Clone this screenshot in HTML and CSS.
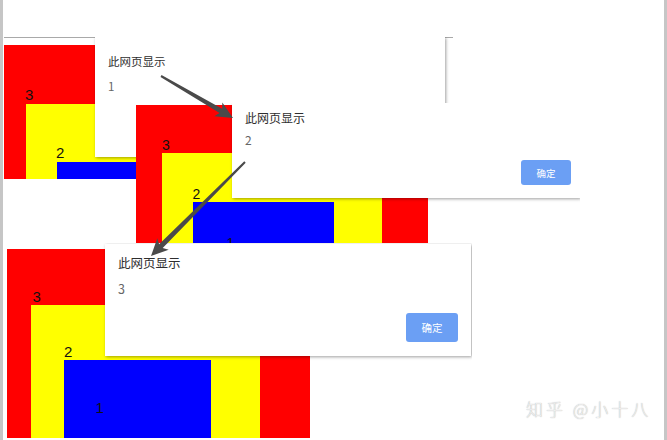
FILE: index.html
```html
<!DOCTYPE html>
<html lang="zh-CN">
<head>
<meta charset="utf-8">
<title>此网页显示</title>
<link rel="stylesheet" href="styles.css">
</head>
<body>
<div class="desk">
  <div class="bar"></div>
  <div class="stage">
    <div class="shot shot1">
      <div class="rule"></div>
      <div class="box red">
        <div class="lbl l3">3</div>
        <div class="box yellow">
          <div class="lbl l2">2</div>
          <div class="box blue"><div class="lbl l1">1</div></div>
        </div>
      </div>
      <div class="dialog">
        <div class="title">此网页显示</div>
        <div class="msg">1</div>
        <div class="actions"><button class="ok">确定</button></div>
      </div>
    </div>

    <div class="shot shot2">
      <div class="box red">
        <div class="lbl l3">3</div>
        <div class="box yellow">
          <div class="lbl l2">2</div>
          <div class="box blue"><div class="lbl l1">1</div></div>
        </div>
      </div>
      <div class="dialog">
        <div class="title">此网页显示</div>
        <div class="msg">2</div>
        <div class="actions"><button class="ok">确定</button></div>
      </div>
    </div>

    <div class="shot shot3">
      <div class="box red">
        <div class="lbl l3">3</div>
        <div class="box yellow">
          <div class="lbl l2">2</div>
          <div class="box blue"><div class="lbl l1">1</div></div>
        </div>
      </div>
      <div class="dialog">
        <div class="title">此网页显示</div>
        <div class="msg">3</div>
        <div class="actions"><button class="ok">确定</button></div>
      </div>
    </div>
  </div>
  <div class="bar"></div>

  <svg class="arrows" width="667" height="440" viewBox="0 0 667 440" aria-hidden="true">
    <polygon points="160.5,76.9 219.6,113.1 214.3,116.3 233,118 222.3,102.5 222.2,108.7 161.5,75.1"/>
    <polygon points="245.7,162.7 162.7,247.9 168.7,249.7 151,256 157.3,238.3 159.1,244.3 244.3,161.3"/>
  </svg>

  <div class="mark">知乎 @小十八</div>
</div>
</body>
</html>
```

FILE: styles.css
```css
* { box-sizing: border-box; }

html, body {
  margin: 0;
  padding: 0;
  background: #fff;
}

.desk {
  position: relative;
  width: 667px;
  height: 440px;
  display: flex;
  overflow: hidden;
  background: #fff;
}

.bar {
  width: 3px;
  flex: none;
  background: #c6c6c6;
}

.stage {
  position: relative;
  flex: 1;
}

/* each screenshot is a window placed on the canvas */
.shot {
  position: absolute;
  background: #fff;
  overflow: hidden;
}

.shot1 { left: 1px; top: 37px; width: 449px; height: 142px; }
.shot2 { left: 133px; top: 103px; width: 444px; height: 140px; }
.shot3 { left: 0; top: 243px; width: 469px; height: 195px; }

.rule {
  height: 1px;
  background: #a9a9a9;
}

/* nested coloured boxes */
.box { position: relative; }
.red { background: #ff0000; }
.yellow { background: #ffff00; }
.blue { background: #0000ff; }

.lbl {
  font-family: "Liberation Sans", "Noto Sans", sans-serif;
  color: #111;
}

/* frame 1 */
.shot1 .red { margin-top: 7px; width: 300px; height: 150px; padding-top: 40px; }
.shot1 .yellow { margin-left: 22px; width: 250px; height: 90px; padding-top: 39px; }
.shot1 .blue { margin-left: 31px; width: 200px; height: 60px; padding-top: 40px; }
.shot1 .lbl { font-size: 15px; height: 19px; line-height: 19px; }
.shot1 .l3 { margin-left: 21px; }
.shot1 .l2 { margin-left: 30px; }
.shot1 .l1 { margin-left: 31px; }

/* frame 2 */
.shot2 .red { margin-top: 2px; width: 292px; height: 150px; padding-top: 33px; }
.shot2 .yellow { margin-left: 26px; width: 220px; height: 100px; padding-top: 34px; }
.shot2 .blue { margin-left: 31px; width: 141px; height: 60px; padding-top: 34px; }
.shot2 .lbl { font-size: 14px; height: 15px; line-height: 15px; }
.shot2 .l3 { margin-left: 26px; }
.shot2 .l2 { margin-left: 30.5px; }
.shot2 .l1 { margin-left: 33.5px; }

/* frame 3 */
.shot3 .red { margin-top: 6px; margin-left: 4px; width: 303px; height: 200px; padding-top: 40px; }
.shot3 .yellow { margin-left: 24px; width: 229px; height: 140px; padding-top: 39px; }
.shot3 .blue { margin-left: 33px; width: 147px; height: 90px; padding-top: 40px; }
.shot3 .lbl { font-size: 15px; height: 16px; line-height: 16px; }
.shot3 .l3 { margin-left: 25.5px; }
.shot3 .l2 { margin-left: 33px; }
.shot3 .l1 { margin-left: 31.5px; }

/* alert dialogs (overlay the page) */
.dialog {
  position: absolute;
  display: flex;
  flex-direction: column;
  background: #fff;
  overflow: hidden;
  font-family: "Noto Sans CJK SC", "Noto Sans", sans-serif;
  box-shadow: 1px 1px 3px rgba(0, 0, 0, 0.38);
}

.title { color: #2e2e2e; }
.msg { color: #666; }

.actions {
  display: flex;
  justify-content: flex-end;
}

.ok {
  border: none;
  border-radius: 3px;
  background: #6b9ff4;
  color: #fff;
  font-family: "Noto Sans CJK SC", sans-serif;
  padding: 0;
  margin: 0;
}

.shot1 .dialog { left: 91px; top: 0; width: 350px; height: 120px; padding: 16px 13px 13px 13px; }
.shot1 .title, .shot1 .msg { font-size: 11.5px; line-height: 17px; }
.shot1 .msg { margin-top: 8px; }
.shot1 .actions { margin-top: 13px; }
.shot1 .ok { width: 50px; height: 26px; font-size: 10px; }

.shot2 .dialog { left: 96px; top: 0; width: 348px; height: 95px; padding: 6px 9px 13px 13px; }
.shot2 .title, .shot2 .msg { font-size: 12px; line-height: 17px; }
.shot2 .msg { margin-top: 5px; }
.shot2 .actions { margin-top: 12px; }
.shot2 .ok { width: 50px; height: 25px; font-size: 9.5px; }

.shot3 .dialog { left: 102px; top: 1px; width: 366px; height: 112px; padding: 10px 13px 14px 13px; }
.shot3 .title, .shot3 .msg { font-size: 12.5px; line-height: 18px; }
.shot3 .msg { margin-top: 8px; }
.shot3 .actions { margin-top: 15px; }
.shot3 .ok { width: 52px; height: 29px; font-size: 10.5px; }

/* annotation arrows drawn over the screenshots */
.arrows {
  position: absolute;
  left: 0;
  top: 0;
  pointer-events: none;
}
.arrows polygon { fill: #4a4a4a; }

/* watermark */
.mark {
  position: absolute;
  left: 526px;
  top: 399px;
  font-family: "Noto Sans CJK SC", sans-serif;
  font-weight: 300;
  font-size: 17px;
  line-height: 20px;
  letter-spacing: 3px;
  white-space: nowrap;
  color: #f2f2f2;
  text-shadow: 0 0 1px rgba(0, 0, 0, 0.4);
}
```
